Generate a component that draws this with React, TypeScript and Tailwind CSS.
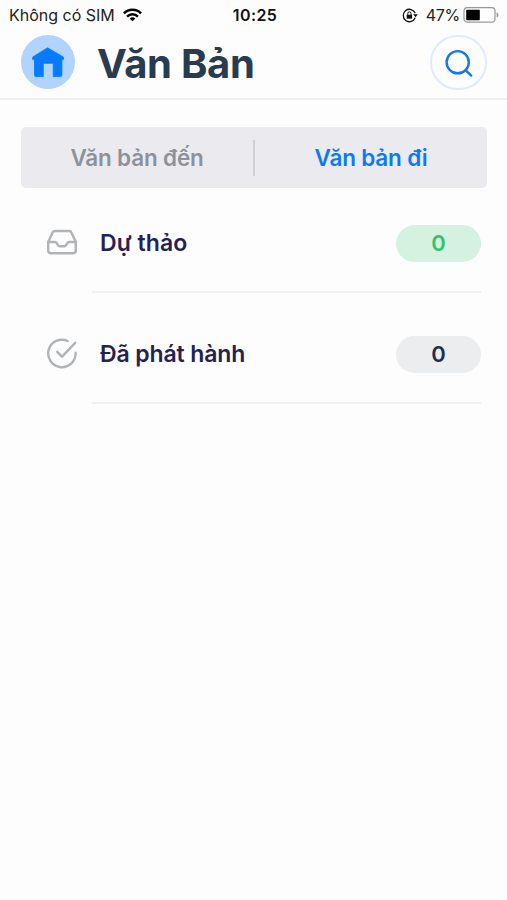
import React from "react";

const folders = [
  {
    label: "Dự thảo",
    count: 0,
    labelClass: "tracking-[0.1px]",
    badge: "bg-[#d5f2e0] text-[#34c26c]",
    icon: <InboxIcon />,
  },
  {
    label: "Đã phát hành",
    count: 0,
    labelClass: "tracking-[-0.12px]",
    badge: "bg-[#ebedee] text-[#232d4d]",
    icon: <CheckIcon />,
  },
];

function WifiIcon() {
  return (
    <svg className="h-[14px] w-[19px]" viewBox="0 0 20 14" fill="none" stroke="#000" strokeWidth="2.6">
      <path d="M1 5.2a12.8 12.8 0 0 1 18 0" />
      <path d="M4.3 8.6a8.1 8.1 0 0 1 11.4 0" />
      <path d="M10 13.6 7 10.7a4.3 4.3 0 0 1 6 0z" fill="#000" stroke="none" />
    </svg>
  );
}

function RotationLockIcon() {
  return (
    <svg className="h-[15px] w-[16px]" viewBox="0 0 16 15" fill="none" stroke="#111" strokeWidth="1.3">
      <path d="M13.2 9.8A6.2 6.2 0 1 1 13.2 5.2" />
      <path d="M11.2 6.2h4.6l-2.3 3z" fill="#111" stroke="none" />
      <path d="M4.7 6.8h5.4v3.9H4.7z" fill="#111" stroke="none" />
      <path d="M5.8 7V5.4a1.6 1.6 0 0 1 3.2 0V7" strokeWidth="1" />
    </svg>
  );
}

function BatteryIcon() {
  return (
    <svg className="h-[16px] w-[36px]" viewBox="0 0 36 16" fill="none">
      <rect x="1" y="0.7" width="31" height="14.4" rx="3.2" stroke="#999" strokeWidth="1.2" />
      <rect x="3.2" y="2.8" width="13.6" height="10.4" rx="0.6" fill="#000" />
      <path d="M33.6 5.3c2.4.8 2.4 4.4 0 5.2z" fill="#999" />
    </svg>
  );
}

function HomeIcon() {
  return (
    <svg className="h-[32px] w-[34px]" viewBox="0 0 34 32" fill="#067bfc">
      <path
        d="M16.6 1.8 32.4 11v2.6h-1.5v15.6a1.4 1.4 0 0 1-1.4 1.4h-7.3V17.3h-9.9v13.3H4.9a1.4 1.4 0 0 1-1.4-1.4V13.6H1.7V11z"
        stroke="#067bfc"
        strokeWidth="0.8"
        strokeLinejoin="round"
      />
    </svg>
  );
}

function SearchIcon() {
  return (
    <svg className="h-[28px] w-[28px]" viewBox="0 0 28 28" fill="none" stroke="#1777ee" strokeWidth="2.4" strokeLinecap="round">
      <circle cx="12.7" cy="13.2" r="11.1" />
      <path d="m20.6 21.2 5.6 5.4" />
    </svg>
  );
}

function InboxIcon() {
  return (
    <svg
      className="mb-[2px] h-[26px] w-[32px]"
      viewBox="0 0 32 26"
      fill="none"
      stroke="#b0b4b7"
      strokeWidth="2.4"
      strokeLinecap="round"
      strokeLinejoin="round"
    >
      <path d="M2.2 13 6.6 3.5A2.5 2.5 0 0 1 8.9 2h14.2a2.5 2.5 0 0 1 2.3 1.5L29.8 13v8.6a2.6 2.6 0 0 1-2.6 2.6H4.8a2.6 2.6 0 0 1-2.6-2.6z" />
      <path d="M2.2 13h6.6c1.6 0 1.9.9 2.5 2.1.8 1.6 1.4 2.2 2.7 2.2h4c1.3 0 1.9-.6 2.7-2.2.6-1.2.9-2.1 2.5-2.1h6.6" />
    </svg>
  );
}

function CheckIcon() {
  return (
    <svg
      className="mb-[1px] h-[32px] w-[32px]"
      viewBox="0 0 32 32"
      fill="none"
      stroke="#b0b4b7"
      strokeWidth="2.4"
      strokeLinecap="round"
      strokeLinejoin="round"
    >
      <path d="M29.6 14.8V16A13.7 13.7 0 1 1 21.6 3" />
      <path d="M29.2 4.8 16 18.6l-4.8-4.8" />
    </svg>
  );
}

function StatusBar() {
  return (
    <div className="grid h-[30px] grid-cols-[1fr_auto_1fr] items-center pr-[8px] pl-[9px] text-[16px] text-[#222]">
      <div className="flex items-center gap-[8px]">
        <span className="whitespace-nowrap">Không có SIM</span>
        <WifiIcon />
      </div>
      <span className="pl-[2px] font-semibold tracking-[0.4px] text-[#111]">10:25</span>
      <div className="flex items-center justify-end">
        <RotationLockIcon />
        <span className="mr-[3px] ml-[8px] tracking-[-0.3px]">47%</span>
        <BatteryIcon />
      </div>
    </div>
  );
}

export default function App() {
  return (
    <div className="h-[900px] w-[507px] overflow-hidden bg-[#fdfdfd] font-['Inter',sans-serif]">
      <StatusBar />
      <header className="flex h-[70px] items-start border-b-2 border-[#eeeff0] pt-[5px] pr-5 pl-[21px]">
        <button className="flex h-[54px] w-[54px] items-center justify-center rounded-full bg-[#b0d4fe]">
          <HomeIcon />
        </button>
        <h1 className="ml-[22px] pt-[4px] text-[40px] leading-[50px] font-bold tracking-[-0.3px] whitespace-nowrap text-[#293b4e]">
          Văn Bản
        </h1>
        <button className="ml-auto flex h-[55px] w-[57px] items-center justify-center rounded-full border-2 border-[#e0eafc]">
          <SearchIcon />
        </button>
      </header>

      <nav className="mx-5 mt-[27px] ml-[21px] flex h-[61px] items-center rounded-[5px] bg-[#ebebef] text-[22.5px] font-semibold">
        <button className="flex-1 pt-[1px] tracking-[-0.18px] text-[#8c929b]">Văn bản đến</button>
        <div className="h-[36px] w-[2px] bg-[#cfd0d5]" />
        <button className="flex-1 pt-[1px] tracking-[-0.18px] text-[#0a7afa]">Văn bản đi</button>
      </nav>

      <ul className="pr-[26px] pl-[46px]">
        {folders.map((folder) => (
          <li key={folder.label} className="flex h-[111px]">
            <div className="flex h-[110px] w-[46px] items-center">{folder.icon}</div>
            <div className="mb-[6px] flex flex-1 items-center justify-between border-b-2 border-[#f0f0f1] pt-[7px] pl-[8px]">
              <span className={`pt-[1px] text-[23px] font-semibold whitespace-nowrap text-[#262250] ${folder.labelClass}`}>
                {folder.label}
              </span>
              <span className={`flex h-[37px] w-[85px] items-center justify-center rounded-full pt-[1px] text-[22px] font-semibold ${folder.badge}`}>
                {folder.count}
              </span>
            </div>
          </li>
        ))}
      </ul>
    </div>
  );
}
